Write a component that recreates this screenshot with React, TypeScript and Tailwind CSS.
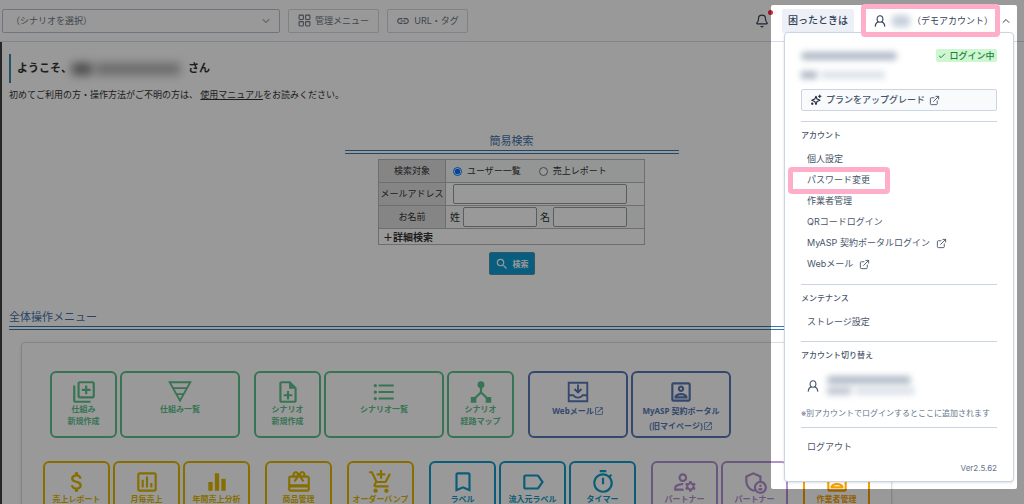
import React from 'react';
import {
  MdOutlineLibraryAdd,
  MdOutlineNoteAdd,
  MdFormatListBulleted,
  MdOutlinePortrait,
  MdOpenInNew,
  MdAttachMoney,
  MdOutlinePoll,
  MdEqualizer,
  MdCardGiftcard,
  MdAddShoppingCart,
  MdBookmarkBorder,
  MdLabelOutline,
  MdOutlineTimer,
  MdOutlineManageAccounts,
  MdOutlineAdminPanelSettings,
  MdLink,
  MdSearch,
} from 'react-icons/md';
import { ExternalLink, ChevronDown, ChevronUp, Check, Bell } from 'lucide-react';

type IconProps = { className?: string };

function FunnelIcon({ className }: IconProps) {
  return (
    <svg viewBox="0 0 24 24" className={className} fill="none" stroke="currentColor" strokeWidth="1.7">
      <path d="M2.500 3h19L12 20z M5.500 8.400h13 M8.600 13.900h6.800" />
    </svg>
  );
}

function HubIcon({ className }: IconProps) {
  return (
    <svg viewBox="-2 -2 28 28" className={className} fill="currentColor">
      <circle cx="12" cy="4.2" r="3.7" />
      <path d="M10.800 6h2.400v8h-2.400z M1 17.500h6v6H1z M17 17.500h6v6h-6z" />
      <path d="M5 19l7-6.500 7 6.500" fill="none" stroke="currentColor" strokeWidth="2.400" />
    </svg>
  );
}

function InboxIcon({ className }: IconProps) {
  return (
    <svg viewBox="-2 -2 28 28" className={className} fill="none" stroke="currentColor" strokeWidth="2">
      <path d="M2 2h20v20H2z M2 15.500h5c1 1.600 2.800 2.500 5 2.500s4-.9 5-2.500h5 M12 4v8 M8.200 8.800l3.800 3.700 3.800-3.700" />
    </svg>
  );
}

function PersonIcon({ className }: IconProps) {
  return (
    <svg viewBox="0 0 24 24" className={className} fill="none" stroke="currentColor" strokeWidth="2.200" strokeLinecap="round">
      <ellipse cx="12" cy="8" rx="5.800" ry="6.500" />
      <path d="M2.500 22.500c.2-4.500 2.600-7.600 6.200-8.800 M21.500 22.500c-.2-4.500-2.600-7.600-6.200-8.800" />
    </svg>
  );
}

function SparkleIcon({ className }: IconProps) {
  return (
    <svg viewBox="0 0 24 24" className={className} fill="none" stroke="currentColor" strokeWidth="2.200" strokeLinejoin="round" strokeLinecap="round">
      <path d="M12 4.500l2 5.500 6 2.500-6 2.500-2 6-2.500-6-6-2.500 6-2.500z M19.500 2v5 M17 4.500h5" />
      <circle cx="4.500" cy="19.500" r="1.200" />
    </svg>
  );
}

function GridIcon({ className }: IconProps) {
  return (
    <svg viewBox="0 0 24 24" className={className} fill="none" stroke="currentColor" strokeWidth="2">
      <rect x="2" y="2" width="8" height="8" rx="1.500" />
      <rect x="14" y="2" width="8" height="8" rx="1.500" />
      <rect x="2" y="14" width="8" height="8" rx="1.500" />
      <rect x="14" y="14" width="8" height="8" rx="1.500" />
    </svg>
  );
}

type Tile = {
  icon: React.ComponentType<IconProps>;
  lines: string[];
  tone: string;
  width?: string;
  external?: boolean;
};

const green = 'border-[#5dc28b] text-[#5dc28b]';
const navy = 'border-[#5878b8] text-[#5878b8]';
const gold = 'border-[#e0b800] text-[#e0b800]';
const blue = 'border-[#0f9cc8] text-[#0f9cc8]';
const purple = 'border-[#b58fce] text-[#b58fce]';
const orange = 'border-[#f5a000] text-[#f5a000]';

const firstRow: Tile[][] = [
  [
    { icon: MdOutlineLibraryAdd, lines: ['仕組み', '新規作成'], tone: green },
    { icon: FunnelIcon, lines: ['仕組み一覧'], tone: green, width: 'w-30' },
  ],
  [
    { icon: MdOutlineNoteAdd, lines: ['シナリオ', '新規作成'], tone: green },
    { icon: MdFormatListBulleted, lines: ['シナリオ一覧'], tone: green, width: 'w-30' },
    { icon: HubIcon, lines: ['シナリオ', '経路マップ'], tone: green },
  ],
  [
    { icon: InboxIcon, lines: ['Webメール'], tone: navy, width: 'w-25', external: true },
    { icon: MdOutlinePortrait, lines: ['MyASP 契約ポータル', '(旧マイページ)'], tone: navy, width: 'w-25', external: true },
  ],
];

const secondRow: Tile[][] = [
  [
    { icon: MdAttachMoney, lines: ['売上レポート'], tone: gold },
    { icon: MdOutlinePoll, lines: ['月毎売上'], tone: gold },
    { icon: MdEqualizer, lines: ['年間売上分析'], tone: gold },
  ],
  [{ icon: MdCardGiftcard, lines: ['商品管理'], tone: gold }],
  [{ icon: MdAddShoppingCart, lines: ['オーダーバンプ'], tone: gold }],
  [
    { icon: MdBookmarkBorder, lines: ['ラベル'], tone: blue },
    { icon: MdLabelOutline, lines: ['流入元ラベル'], tone: blue },
    { icon: MdOutlineTimer, lines: ['タイマー'], tone: blue },
  ],
  [
    { icon: MdOutlineManageAccounts, lines: ['パートナー'], tone: purple },
    { icon: MdOutlineAdminPanelSettings, lines: ['パートナー'], tone: purple },
  ],
  [{ icon: MdOutlinePortrait, lines: ['作業者管理'], tone: orange }],
];

function TileRow({ groups, className }: { groups: Tile[][]; className: string }) {
  return (
    <div className={`flex ${className}`}>
      {groups.map((group, i) => (
        <div key={i} className="flex shrink-0 gap-[3px]">
          {group.map((tile, k) => (
            <a
              key={k}
              href="#"
              className={`flex h-[67px] shrink-0 flex-col items-center rounded-md border-2 pt-[6px] text-[8px] font-bold whitespace-nowrap ${tile.external ? 'leading-[15px]' : 'leading-3'} ${tile.width ?? 'w-[67px]'} ${tile.tone}`}
            >
              <tile.icon className="-mb-[2px] size-[26px] shrink-0" />
              {tile.lines.map((line, n) => (
                <span key={line} className="flex items-center">
                  {line}
                  {tile.external && n === tile.lines.length - 1 && <MdOpenInNew className="size-[10px]" />}
                </span>
              ))}
            </a>
          ))}
        </div>
      ))}
    </div>
  );
}

function TopBar() {
  return (
    <header className="flex h-[42px] items-center border-b border-[#d5dbea] pr-3 pl-[2px] text-[9px] text-[#6c7683]">
      <button type="button" className="flex h-6 w-[278px] items-center justify-between rounded-xs border border-[#b9c4d4] pr-[7px] pl-2">
        （シナリオを選択）
        <ChevronDown className="size-3" />
      </button>
      <button type="button" className="ml-2 flex h-6 w-[91px] items-center justify-center gap-1 rounded-xs border border-[#d4d9e1]">
        <GridIcon className="size-[13px]" />
        管理メニュー
      </button>
      <button type="button" className="ml-2 flex h-6 w-[81px] items-center justify-center gap-1 rounded-xs border border-[#d4d9e1]">
        <MdLink className="size-[14px]" />
        URL・タグ
      </button>
      <div className="ml-auto flex shrink-0 items-center text-[#334155]">
        <button type="button" aria-label="お知らせ" className="relative mr-[13px]">
          <Bell className="size-[14px]" />
          <span className="absolute -top-1 -right-1 size-[5px] rounded-full bg-[#e02d3c]" />
        </button>
        <button type="button" className="flex h-6 w-[72px] items-center justify-center rounded-xs bg-[#edf1f7] text-[10px] font-medium">困ったときは</button>
        <button type="button" className="relative ml-[7px] flex h-[33px] w-[139px] shrink-0 items-center rounded-sm pl-[13px] whitespace-nowrap">
          <PersonIcon className="size-3" />
          <span className="mr-[2px] ml-[6px] h-3 w-[18px] rounded bg-slate-400/50 blur-[3px]" />
          （デモアカウント）
          <span className="absolute inset-0 z-30 rounded-sm border-5 border-[#ffaec9]" />
        </button>
        <ChevronUp className="size-3" />
      </div>
    </header>
  );
}

function SectionTitle({ children, center }: { children: string; center?: boolean }) {
  return (
    <h2 className={`border-b-4 border-double border-[#3a78b0] pb-px text-[11px] leading-4 text-[#4272aa] ${center ? 'text-center' : ''}`}>
      {children}
    </h2>
  );
}

function SearchForm() {
  const head = 'border border-[#b8b8b8] bg-[#dedede] text-center font-normal';
  const field = 'rounded-xs border border-[#999] bg-white';
  return (
    <form className="mx-auto w-[334px]">
      <SectionTitle center>簡易検索</SectionTitle>
      <table className="mx-auto mt-[5px] w-[267px] table-fixed border-collapse text-[9px] text-[#333]">
        <tbody>
          <tr className="h-[23px]">
            <th className={`w-[67px] ${head}`}>検索対象</th>
            <td className="border border-[#b8b8b8] bg-[#f7fafa]">
              <div className="flex items-center gap-[18px] pl-[7px]">
                <label className="flex items-center gap-[5px]">
                  <input type="radio" name="target" defaultChecked className="size-[9px] accent-[#0075ff]" />
                  ユーザー一覧
                </label>
                <label className="flex items-center gap-[5px]">
                  <input type="radio" name="target" className="size-[9px]" />
                  売上レポート
                </label>
              </div>
            </td>
          </tr>
          <tr className="h-[23px]">
            <th className={head}><label htmlFor="mail">メールアドレス</label></th>
            <td className="border border-[#b8b8b8]">
              <input id="mail" className={`ml-[7px] block h-5 w-[174px] ${field}`} />
            </td>
          </tr>
          <tr className="h-[23px]">
            <th className={head}>お名前</th>
            <td className="border border-[#b8b8b8] bg-[#f7fafa] text-[10px]">
              <div className="flex items-center gap-[3px] pl-1">
                <label htmlFor="family">姓</label>
                <input id="family" className={`h-5 w-[74px] ${field}`} />
                <label htmlFor="given">名</label>
                <input id="given" className={`h-5 w-[74px] ${field}`} />
              </div>
            </td>
          </tr>
          <tr className="h-4">
            <td colSpan={2} className="border border-[#b8b8b8] pl-1 text-[10px] leading-3 font-bold">＋詳細検索</td>
          </tr>
        </tbody>
      </table>
      <button type="button" className="mx-auto mt-[7px] flex h-[23px] w-[46px] items-center justify-center gap-1 rounded-xs border border-[#5b8fa8] bg-[#0f9cd3] text-[8px] font-bold text-white">
        <MdSearch className="size-[14px]" />
        検索
      </button>
    </form>
  );
}

function MenuHeading({ children }: { children: string }) {
  return <h3 className="text-[8px] leading-3 font-medium text-[#475569]">{children}</h3>;
}

function MenuLink({ children, external }: { children: string; external?: boolean }) {
  return (
    <a href="#" className="flex items-center gap-[6px] pl-[6px] text-[9px] leading-4">
      {children}
      {external && <ExternalLink className="size-[11px]" />}
    </a>
  );
}

function AccountMenu() {
  return (
    <aside className="absolute top-8 right-[10px] z-20 w-[230px] rounded-sm border border-[#cbd5e1] bg-white px-4 pt-4 pb-[7px] text-[#475569] shadow-sm">
      <div className="flex items-start justify-between">
        <div className="flex flex-col gap-[11px] pt-[3px]">
          <span className="h-2 w-24 rounded bg-slate-500/50 blur-[3px]" />
          <span className="flex gap-1 blur-[3px]">
            <span className="h-2 w-4 bg-slate-500/50" />
            <span className="h-2 w-16 bg-slate-400/30" />
          </span>
        </div>
        <span className="flex h-[13px] w-[61px] items-center justify-center gap-[3px] rounded-xs bg-[#ccf7d1] text-[9px] font-medium text-[#23803a]">
          <Check className="size-2" strokeWidth={3} />
          ログイン中
        </span>
      </div>
      <button type="button" className="mt-[10px] flex h-[22px] w-full items-center gap-1 rounded-xs border border-[#cbd5e1] bg-[#f8fafc] pl-2 text-[9px] font-medium">
        <SparkleIcon className="size-3 text-[#1e293b]" />
        プランをアップグレード
        <ExternalLink className="size-[11px]" />
      </button>
      <section className="mt-[10px] border-t border-[#cbd5e1] pt-[7px]">
        <MenuHeading>アカウント</MenuHeading>
        <nav className="mt-[10px] flex flex-col gap-[5px]">
          <MenuLink>個人設定</MenuLink>
          <div className="relative">
            <MenuLink>パスワード変更</MenuLink>
            <span className="absolute -top-[5px] -left-[13px] h-[27px] w-[102px] rounded-sm border-5 border-[#ffaec9]" />
          </div>
          <MenuLink>作業者管理</MenuLink>
          <MenuLink>QRコードログイン</MenuLink>
          <MenuLink external>MyASP 契約ポータルログイン</MenuLink>
          <MenuLink external>Webメール</MenuLink>
        </nav>
      </section>
      <section className="mt-3 border-t border-[#cbd5e1] pt-[7px] pb-[11px]">
        <MenuHeading>メンテナンス</MenuHeading>
        <nav className="mt-[10px]"><MenuLink>ストレージ設定</MenuLink></nav>
      </section>
      <section className="border-t border-[#cbd5e1] pt-[7px] pb-2">
        <MenuHeading>アカウント切り替え</MenuHeading>
        <div className="mt-[15px] flex items-center gap-2 pl-[6px]">
          <PersonIcon className="size-3" />
          <span className="flex flex-col gap-[3px]">
            <span className="h-2 w-21 rounded bg-slate-500/50 blur-[3px]" />
            <span className="flex gap-1 blur-[3px]">
              <span className="h-2 w-6 bg-slate-500/40" />
              <span className="h-2 w-15 bg-slate-400/30" />
            </span>
          </span>
        </div>
        <p className="mt-3 text-[8px] leading-3 whitespace-nowrap text-[#64748b]">※別アカウントでログインするとここに追加されます</p>
      </section>
      <section className="border-t border-[#cbd5e1] pt-[11px]">
        <MenuLink>ログアウト</MenuLink>
        <p className="mt-[7px] text-right text-[8px] leading-3 text-[#64748b]">Ver2.5.62</p>
      </section>
    </aside>
  );
}

export default function App() {
  return (
    <div className="relative h-screen overflow-hidden bg-white font-['Inter','Noto_Sans_CJK_JP',sans-serif]">
      <TopBar />
      <main className="border-l-2 border-[#404040] pt-3 pr-[10px] pl-[7px] font-['Noto_Sans','Noto_Sans_CJK_JP',sans-serif] text-[#333]">
        <h1 className="flex h-[29px] items-center border-l-2 border-[#3a8ba0] pl-[6px] text-[11px] font-bold">
          ようこそ、
          <span className="flex items-center gap-1 blur-[5px]">
            <span className="h-3 w-5 bg-black/50" />
            <span className="h-3 w-21 bg-black/30" />
          </span>
          <span className="ml-2">さん</span>
        </h1>
        <p className="mt-1 text-[9px] leading-4">
          初めてご利用の方・操作方法がご不明の方は、 <a href="#" className="underline">使用マニュアル</a>をお読みください。
        </p>
        <div className="mt-[30px]"><SearchForm /></div>
        <section className="mt-[34px]">
          <SectionTitle>全体操作メニュー</SectionTitle>
          <div className="mt-3 mr-[122px] ml-3 flex h-60 flex-col gap-[23px] rounded-sm border border-[#ddd] pt-[28px] shadow-sm">
            <TileRow groups={firstRow} className="gap-[14px] pl-[28px]" />
            <TileRow groups={secondRow} className="gap-[15px] pl-[21px]" />
          </div>
        </section>
      </main>
      <AccountMenu />
      <div className="pointer-events-none absolute top-[5px] right-[7px] z-20 h-[484px] w-[246px] rounded-xs shadow-[0_0_0_1200px_rgba(0,0,0,0.4)]" />
    </div>
  );
}
